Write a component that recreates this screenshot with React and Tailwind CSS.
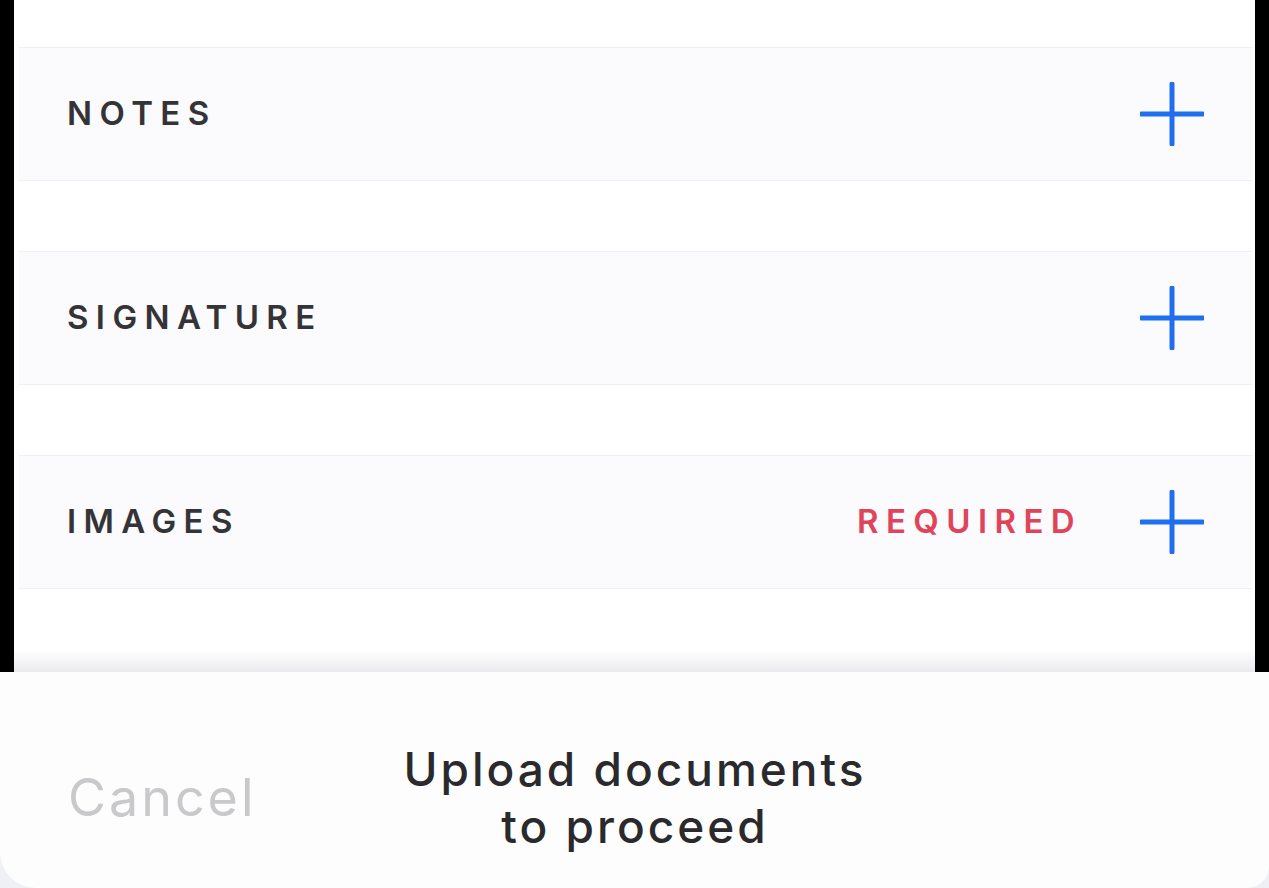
import React from 'react'

const FONT = { fontFamily: 'Inter, "Noto Sans", sans-serif' }

const PlusIcon = () => (
    <svg width="64" height="64" viewBox="0 0 64 64" className="shrink-0">
        <path d="M32 2v60M1 32h62" stroke="#1f6ff0" strokeWidth="5" strokeLinecap="round" />
    </svg>
)

const AttachRow = ({ label, required }) => (
    <div className="h-[134px] bg-[#fbfafc] border-t border-b border-[#f0eff3] flex items-center pl-[48px] pr-[48px]">
        <span className="text-[33px] font-semibold tracking-[7.4px] text-[#343437]">{label}</span>
        <div className="ml-auto flex items-center gap-[58px]">
            {required && <span className="text-[33px] font-semibold tracking-[7.4px] text-[#e0445a]">REQUIRED</span>}
            <PlusIcon />
        </div>
    </div>
)

export default function App() {
    return (
        <div className="w-[1269px] h-[888px] overflow-hidden bg-[#eef0f6] flex flex-col" style={FONT}>
            {/* list area inside dark frame */}
            <div className="h-[672px] bg-black flex px-[14px] shrink-0">
                <div className="flex-1 bg-white flex flex-col">
                    <div className="h-[47px] shrink-0" />
                    <div className="flex flex-col gap-[70px] pl-[5px] pr-[3px]">
                        <AttachRow label="NOTES" />
                        <AttachRow label="SIGNATURE" />
                        <AttachRow label="IMAGES" required />
                    </div>
                    <div className="flex-1" />
                    <div className="h-[22px] bg-gradient-to-b from-white to-[#ebeaee]" />
                </div>
            </div>

            {/* bottom action sheet */}
            <div className="flex-1 bg-[#fdfdfe] rounded-bl-[36px] rounded-br-[22px] flex items-center pl-[68px] pt-[36px]">
                <span className="text-[52px] tracking-[3px] text-[#c9c9cc] w-[307px]">Cancel</span>
                <p className="text-[46px] font-medium tracking-[3px] leading-[57px] text-[#2a2a2c] text-center w-[520px]">
                    Upload documents
                    <br />
                    to proceed
                </p>
            </div>
        </div>
    )
}
